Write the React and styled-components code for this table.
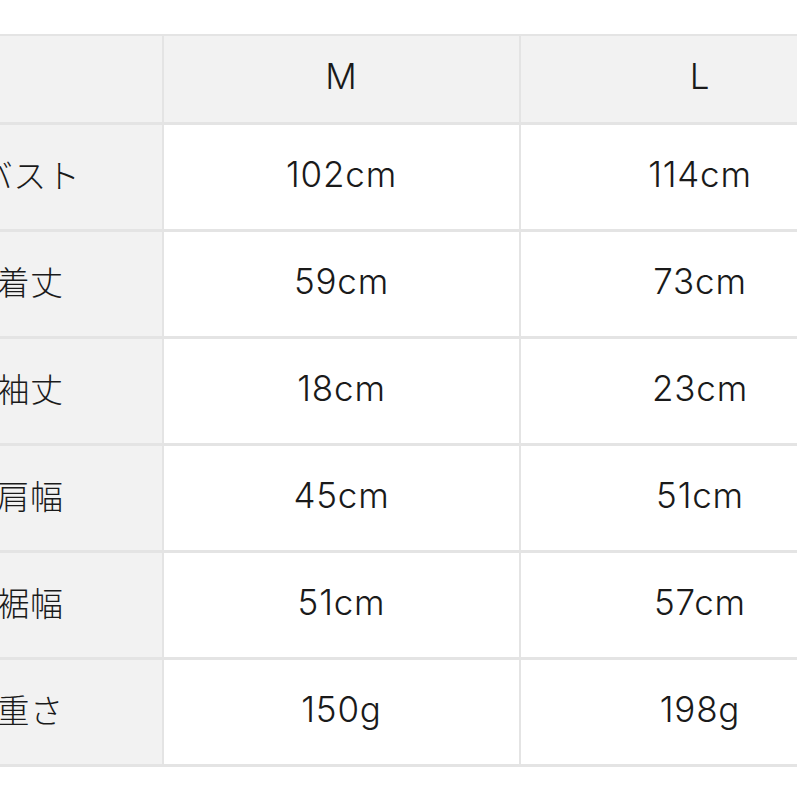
import React from 'react'
import styled, { createGlobalStyle } from 'styled-components'

const GlobalStyle = createGlobalStyle`
  html, body {
    margin: 0;
    padding: 0;
    background: #fff;
    overflow: hidden;
  }
  body {
    font-family: "Noto Sans CJK JP", "Noto Sans", sans-serif;
    color: #1a1a1a;
  }
`

const rows = [
  { label: 'バスト', m: '102cm', l: '114cm' },
  { label: '着丈', m: '59cm', l: '73cm' },
  { label: '袖丈', m: '18cm', l: '23cm' },
  { label: '肩幅', m: '45cm', l: '51cm' },
  { label: '裾幅', m: '51cm', l: '57cm' },
  { label: '重さ', m: '150g', l: '198g' },
]

const Page = styled.div`
  width: 797px;
  height: 797px;
  overflow: hidden;
  padding-top: 34px;
  box-sizing: border-box;
`

const Table = styled.div`
  display: grid;
  grid-template-columns: 264px 355px 358px;
  grid-template-rows: 86px repeat(6, 104px);
  gap: 3px 2px;
  padding: 2px 0 3px;
  margin-left: -102px;
  width: 979px;
  background: #e4e4e4;
`

const Cell = styled.div`
  display: flex;
  align-items: center;
  justify-content: center;
  background: ${p => (p.$head ? '#f2f2f2' : '#fff')};
  font-family: ${p => (p.$label ? '"Noto Sans CJK JP", sans-serif' : 'Inter, "Noto Sans CJK JP", sans-serif')};
  font-size: ${p => (p.$label ? '33px' : '35px')};
  font-weight: 300;
  letter-spacing: ${p => (p.$label ? '0.5px' : '0.8px')};
  padding-bottom: 7px;
  box-sizing: border-box;
`

export default function App() {
  return (
    <>
      <GlobalStyle />
      <Page>
        <Table>
          <Cell $head />
          <Cell $head>M</Cell>
          <Cell $head>L</Cell>
          {rows.map(r => (
            <React.Fragment key={r.label}>
              <Cell $head $label>{r.label}</Cell>
              <Cell>{r.m}</Cell>
              <Cell>{r.l}</Cell>
            </React.Fragment>
          ))}
        </Table>
      </Page>
    </>
  )
}
